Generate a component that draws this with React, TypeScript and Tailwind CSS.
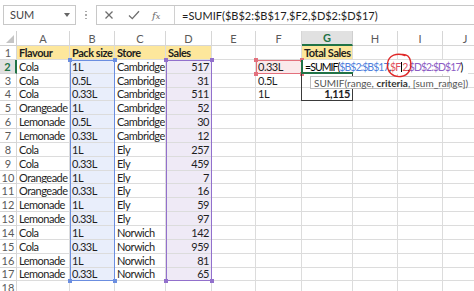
import React from "react";

const LETTERS = ["A", "B", "C", "D", "E", "F", "G", "H", "I", "J"];

const DATA: [string, string, string, number][] = [
  ["Cola", "1L", "Cambridge", 517],
  ["Cola", "0.5L", "Cambridge", 31],
  ["Cola", "0.33L", "Cambridge", 511],
  ["Orangeade", "1L", "Cambridge", 52],
  ["Lemonade", "0.5L", "Cambridge", 30],
  ["Lemonade", "0.33L", "Cambridge", 12],
  ["Cola", "1L", "Ely", 257],
  ["Cola", "0.33L", "Ely", 459],
  ["Orangeade", "1L", "Ely", 7],
  ["Orangeade", "0.33L", "Ely", 16],
  ["Lemonade", "1L", "Ely", 59],
  ["Lemonade", "0.33L", "Ely", 97],
  ["Cola", "1L", "Norwich", 142],
  ["Cola", "0.33L", "Norwich", 959],
  ["Lemonade", "1L", "Norwich", 81],
  ["Lemonade", "0.33L", "Norwich", 65],
];

type CellSpec = { v?: string; right?: boolean; bold?: boolean; bg?: string };

function cellFor(row: number, col: number): CellSpec {
  if (row === 1) {
    const hdr = ["Flavour", "Pack size", "Store", "Sales"];
    if (col < 4) return { v: hdr[col], bold: true, bg: "yellow" };
    if (col === 6) return { v: "Total Sales", bold: true, bg: "yellow" };
    return {};
  }
  if (row >= 2 && row <= 17) {
    const d = DATA[row - 2];
    if (col === 0) return { v: d[0] };
    if (col === 1) return { v: d[1], bg: "blue" };
    if (col === 2) return { v: d[2] };
    if (col === 3) return { v: String(d[3]), right: true, bg: "purple" };
    if (col === 5) {
      if (row === 2) return { v: "0.33L", bg: "red" };
      if (row === 3) return { v: "0.5L" };
      if (row === 4) return { v: "1L" };
    }
    if (col === 6 && row === 4) return { v: "1,115", right: true, bold: true };
  }
  return {};
}

function Cell({ spec }: { spec: CellSpec }) {
  const bg =
    spec.bg === "yellow"
      ? "bg-[#fde79c]"
      : spec.bg === "blue"
      ? "bg-[#e9eefb]"
      : spec.bg === "purple"
      ? "bg-[#efeaf6]"
      : spec.bg === "red"
      ? "bg-[#fbe9eb]"
      : "bg-white";
  return (
    <div
      className={`flex items-center overflow-hidden whitespace-nowrap border-r border-b border-[#dcdcdc] px-[2px] text-[11px] leading-none text-[#1e1e1e] ${bg} ${
        spec.right ? "justify-end" : "justify-start"
      } ${spec.bold ? "font-bold tracking-[-0.45px]" : "font-normal tracking-[-0.5px]"}`}
    >
      {spec.v}
    </div>
  );
}

function Handle({ cls }: { cls: string }) {
  return <div className={`absolute h-[4px] w-[4px] ${cls}`} />;
}

export default function App() {
  const rows = Array.from({ length: 18 }, (_, i) => i + 1);
  return (
    <div className="relative h-[291px] w-[474px] overflow-hidden bg-white font-['Lato',sans-serif]">
      {/* Toolbar */}
      <div className="flex h-[31px] items-start pt-[5px]">
        <div className="ml-[3px] flex h-[20px] w-[73px] items-center justify-between border border-[#c8c8c8] pl-[6px] pr-[5px]">
          <span className="text-[11px] text-[#444]">SUM</span>
          <svg width="6" height="4" viewBox="0 0 6 4">
            <path d="M0 0 L6 0 L3 4 Z" fill="#666" />
          </svg>
        </div>
        <div className="flex h-[20px] w-[20px] flex-col items-center justify-center gap-[2px]">
          <div className="h-[1.5px] w-[1.5px] bg-[#aaa]" />
          <div className="h-[1.5px] w-[1.5px] bg-[#aaa]" />
          <div className="h-[1.5px] w-[1.5px] bg-[#aaa]" />
        </div>
        <div className="flex h-[20px] flex-1 border border-r-0 border-[#c8c8c8]">
          <div className="flex w-[78px] items-center border-r border-[#d0d0d0]">
            <svg width="10" height="10" viewBox="0 0 10 10" className="ml-[7px]">
              <path d="M1.5 1.5 L8.5 8.5 M8.5 1.5 L1.5 8.5" stroke="#6e6e6e" strokeWidth="1.3" />
            </svg>
            <svg width="12" height="10" viewBox="0 0 12 10" className="ml-[14px]">
              <path d="M1 5.5 L4.3 8.6 L11 1.2" stroke="#6e6e6e" strokeWidth="1.3" fill="none" />
            </svg>
            <span className="ml-[12px] font-['DejaVu_Serif',serif] text-[10px] italic text-[#6e6e6e]">
              f<span className="text-[8px]">x</span>
            </span>
          </div>
          <div className="flex items-center whitespace-nowrap pl-[7px] text-[11px] leading-none text-[#1e1e1e]">
            =SUMIF($B$2:$B$17,$F2,$D$2:$D$17)
          </div>
        </div>
      </div>

      {/* Sheet */}
      <div className="relative">
        <div className="grid grid-cols-[17px_53px_45px_51px_46px_44px_46px_51px_45px_45px_45px] grid-rows-[15px_repeat(18,13.85px)]">
          <div className="relative border-r border-b border-[#cfcfcf] bg-white">
            <svg width="8" height="8" viewBox="0 0 8 8" className="absolute bottom-[2px] right-[2px]">
              <path d="M8 0 L8 8 L0 8 Z" fill="#c4c4c4" />
            </svg>
          </div>
          {LETTERS.map((l) => (
            <div
              key={l}
              className={`flex items-center justify-center text-[11px] leading-none ${
                l === "G"
                  ? "border-r border-b-2 border-r-[#cfcfcf] border-b-[#217346] bg-[#e1e1e1] font-bold text-[#217346]"
                  : "border-r border-b border-[#d6d6d6] bg-white text-[#5a5a5a]"
              }`}
            >
              {l}
            </div>
          ))}
          {rows.map((r) => (
            <React.Fragment key={r}>
              <div
                className={`flex items-center justify-center text-[11px] leading-none ${
                  r === 2
                    ? "border-b border-r-2 border-b-[#d6d6d6] border-r-[#217346] bg-[#e1e1e1] font-bold text-[#217346]"
                    : "border-r border-b border-[#d6d6d6] bg-white text-[#5a5a5a]"
                }`}
              >
                {r}
              </div>
              {LETTERS.map((_, c) => (
                <Cell key={c} spec={cellFor(r, c)} />
              ))}
            </React.Fragment>
          ))}
        </div>

        {/* B2:B17 range */}
        <div className="pointer-events-none absolute left-[70px] top-[28.85px] h-[221.6px] w-[45px] border border-[#6b8ee0]" />
        <Handle cls="left-[68px] top-[26.85px] bg-[#6b8ee0]" />
        <Handle cls="left-[113px] top-[26.85px] bg-[#6b8ee0]" />
        <Handle cls="left-[68px] top-[248.45px] bg-[#6b8ee0]" />
        <Handle cls="left-[113px] top-[248.45px] bg-[#6b8ee0]" />

        {/* D2:D17 range */}
        <div className="pointer-events-none absolute left-[166px] top-[28.85px] h-[221.6px] w-[46px] border border-[#9270cc]" />
        <Handle cls="left-[164px] top-[26.85px] bg-[#9270cc]" />
        <Handle cls="left-[210px] top-[26.85px] bg-[#9270cc]" />
        <Handle cls="left-[164px] top-[248.45px] bg-[#9270cc]" />
        <Handle cls="left-[210px] top-[248.45px] bg-[#9270cc]" />

        {/* F2 range */}
        <div className="pointer-events-none absolute left-[256px] top-[28.85px] h-[13.85px] w-[46px] border border-[#e3707c]" />
        <Handle cls="left-[254px] top-[26.85px] bg-[#e3707c]" />
        <Handle cls="left-[300px] top-[26.85px] bg-[#e3707c]" />
        <Handle cls="left-[254px] top-[40.7px] bg-[#e3707c]" />
        <Handle cls="left-[300px] top-[40.7px] bg-[#e3707c]" />

        {/* G2:G4 outline */}
        <div className="pointer-events-none absolute left-[301px] top-[28.85px] h-[41.55px] w-[52px] border border-[#3a3a3a]" />

        {/* G2 in-cell edit */}
        <div className="absolute left-[301px] top-[28.85px] flex h-[13.85px] w-[167px] items-center overflow-hidden whitespace-nowrap border-l-2 border-[#217346] bg-white pl-[2px] text-[10.5px] leading-none tracking-[-0.95px] text-black">
          <span>=SUMIF(</span>
          <span className="text-[#4f7fdc]">$B$2:$B$17</span>
          <span>,</span>
          <span className="text-[#e2505c]">$F</span>
          <span className="mx-[0.5px] h-[10px] w-[1px] shrink-0 bg-black" />
          <span className="text-[#e2505c]">2</span>
          <span>,</span>
          <span className="text-[#8c5cc4]">$D$2:$D$17</span>
          <span>)</span>
        </div>
        <div className="absolute left-[301px] top-[40.7px] h-[2px] w-[52px] bg-[#217346]" />

        {/* Tooltip */}
        <div className="absolute left-[310px] top-[45px] flex h-[13px] w-[140px] items-center whitespace-nowrap border border-[#bdbdbd] bg-white pl-[3px] text-[10px] leading-none text-[#555]">
          SUMIF(range,&nbsp;<span className="font-bold text-[#333]">criteria</span>, [sum_range])
        </div>
      </div>

      {/* Hand-drawn circle */}
      <svg className="pointer-events-none absolute left-0 top-0" width="474" height="291" viewBox="0 0 474 291">
        <path
          d="M405 55.5 C397 52.5 388.5 55 387.5 63.5 C386.5 72 393 77.5 401 76.5 C408.5 75.5 412 69 410.5 61 C409.5 56.5 406 54 401.5 54.5"
          stroke="#e02828"
          strokeWidth="1.4"
          fill="none"
          strokeLinecap="round"
        />
      </svg>
    </div>
  );
}
